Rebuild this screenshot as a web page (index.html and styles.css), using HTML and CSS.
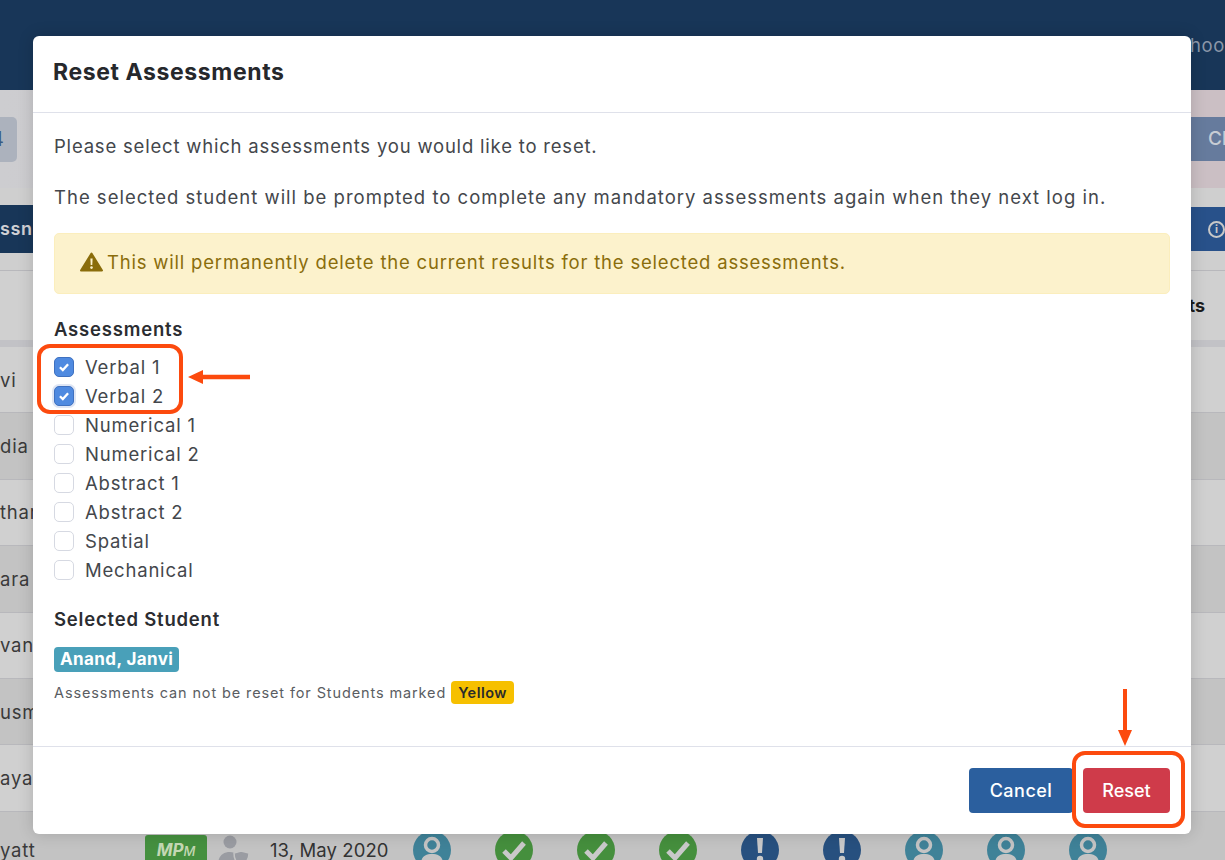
FILE: index.html
```html
<!DOCTYPE html>
<html lang="en">
<head>
  <meta charset="UTF-8" />
  <title>Reset Assessments</title>
  <link rel="stylesheet" href="styles.css">
</head>
<body>
  <div class="page">
    <header class="topbar"><span class="school">hoo</span></header>
    <div class="toolbar">
      <div class="count"><span>4</span></div>
      <div class="close-btn">Cl</div>
    </div>
    <div class="tabs">
      <div class="tab-left">ssn</div>
      <div class="tab-right"><span class="info">i</span></div>
    </div>
    <div class="thead"><span class="th-right">ts</span></div>
    <div class="rows">
      <div class="row"><span class="name">vi</span></div>
      <div class="row alt"><span class="name">dia</span></div>
      <div class="row"><span class="name">thar</span></div>
      <div class="row alt"><span class="name">ara</span></div>
      <div class="row"><span class="name">van</span></div>
      <div class="row alt"><span class="name">usm</span></div>
      <div class="row"><span class="name">aya</span></div>
      <div class="row alt last">
        <span class="name">yatt</span>
        <span class="mpm">MP<small>M</small></span>
        <svg class="guard" width="32" height="30" viewBox="0 0 32 30"><circle cx="12" cy="7" r="6.5" fill="#9a9ca2"/><path d="M0 30c0-9 5-13 12-13 3 0 5 1 7 2v11z" fill="#9a9ca2"/><path d="M23 16l8 2c0 6-2 10-8 12-5-2-7-6-7-12z" fill="#9a9ca2" stroke="#c4c4c4" stroke-width="1.5"/></svg>
        <span class="date">13, May 2020</span>
        <div class="dots">
          <span class="dot teal"><svg viewBox="0 0 38 38"><circle cx="19" cy="14" r="6.5" fill="none" stroke="#c4c4c4" stroke-width="3.5"/><path d="M8 33c0-7 4-10 11-10s11 3 11 10z" fill="#c4c4c4"/></svg></span>
          <span class="dot green"><svg viewBox="0 0 38 38"><path d="M9 20l7 7 13-15" fill="none" stroke="#c9c9c9" stroke-width="5"/></svg></span>
          <span class="dot green"><svg viewBox="0 0 38 38"><path d="M9 20l7 7 13-15" fill="none" stroke="#c9c9c9" stroke-width="5"/></svg></span>
          <span class="dot green"><svg viewBox="0 0 38 38"><path d="M9 20l7 7 13-15" fill="none" stroke="#c9c9c9" stroke-width="5"/></svg></span>
          <span class="dot navy"><svg viewBox="0 0 38 38"><path d="M16 7h6l-1 15h-4z" fill="#c9c9c9"/><circle cx="19" cy="28" r="3.2" fill="#c9c9c9"/></svg></span>
          <span class="dot navy"><svg viewBox="0 0 38 38"><path d="M16 7h6l-1 15h-4z" fill="#c9c9c9"/><circle cx="19" cy="28" r="3.2" fill="#c9c9c9"/></svg></span>
          <span class="dot teal"><svg viewBox="0 0 38 38"><circle cx="19" cy="14" r="6.5" fill="none" stroke="#c4c4c4" stroke-width="3.5"/><path d="M8 33c0-7 4-10 11-10s11 3 11 10z" fill="#c4c4c4"/></svg></span>
          <span class="dot teal"><svg viewBox="0 0 38 38"><circle cx="19" cy="14" r="6.5" fill="none" stroke="#c4c4c4" stroke-width="3.5"/><path d="M8 33c0-7 4-10 11-10s11 3 11 10z" fill="#c4c4c4"/></svg></span>
          <span class="dot teal"><svg viewBox="0 0 38 38"><circle cx="19" cy="14" r="6.5" fill="none" stroke="#c4c4c4" stroke-width="3.5"/><path d="M8 33c0-7 4-10 11-10s11 3 11 10z" fill="#c4c4c4"/></svg></span>
        </div>
      </div>
    </div>
  </div>

  <div class="modal">
    <div class="modal-header"><h2>Reset Assessments</h2></div>
    <div class="modal-body">
      <p>Please select which assessments you would like to reset.</p>
      <p class="long">The selected student will be prompted to complete any mandatory assessments again when they next log in.</p>
      <div class="alert">
        <svg class="warn" width="23" height="20" viewBox="0 0 23 20"><path d="M11.5 1.5L22 18.5H1z" fill="#8a6d0b" stroke="#8a6d0b" stroke-width="2" stroke-linejoin="round"/><path d="M10.4 6.5h2.2l-.3 6.5h-1.6z" fill="#fcf2cc"/><circle cx="11.5" cy="15.6" r="1.3" fill="#fcf2cc"/></svg>
        This will permanently delete the current results for the selected assessments.
      </div>
      <h3>Assessments</h3>
      <div class="checks">
        <label class="check"><span class="box on"><svg width="14" height="14" viewBox="0 0 12 12"><path d="M2.5 6.2l2.5 2.5 4.5-5" fill="none" stroke="#fff" stroke-width="2"/></svg></span>Verbal 1</label>
        <label class="check"><span class="box on focus"><svg width="14" height="14" viewBox="0 0 12 12"><path d="M2.5 6.2l2.5 2.5 4.5-5" fill="none" stroke="#fff" stroke-width="2"/></svg></span>Verbal 2</label>
        <label class="check"><span class="box"></span>Numerical 1</label>
        <label class="check"><span class="box"></span>Numerical 2</label>
        <label class="check"><span class="box"></span>Abstract 1</label>
        <label class="check"><span class="box"></span>Abstract 2</label>
        <label class="check"><span class="box"></span>Spatial</label>
        <label class="check"><span class="box"></span>Mechanical</label>
      </div>
      <h3 class="selected-title">Selected Student</h3>
      <span class="badge student">Anand, Janvi</span>
      <div class="note">Assessments can not be reset for Students marked <span class="badge yellow">Yellow</span></div>
    </div>
    <div class="modal-footer">
      <button class="btn cancel">Cancel</button>
      <button class="btn reset">Reset</button>
    </div>
  </div>

  <!-- annotations drawn over the screenshot -->
  <div class="mark mark-checks"></div>
  <div class="mark mark-reset"></div>
  <svg class="arrow arrow-left" width="62" height="16" viewBox="0 0 62 16"><path d="M62 8H12" stroke="#fc4a0e" stroke-width="4.5"/><path d="M0 8l15-7v14z" fill="#fc4a0e"/></svg>
  <svg class="arrow arrow-down" width="14" height="58" viewBox="0 0 14 58"><path d="M7 0v44" stroke="#fc4a0e" stroke-width="4"/><path d="M7 57L0 41h14z" fill="#fc4a0e"/></svg>
</body>
</html>
```

FILE: styles.css
```css
body {
  margin: 0;
  height: 860px;
  overflow: hidden;
  position: relative;
  font-family: "Inter", "Noto Sans", sans-serif;
  color: #212529;
  background: #cfcfcf;
}
.page {
  height: 860px;
  overflow: hidden;
}
.topbar {
  height: 90px;
  background: #183658;
  display: flex;
  justify-content: flex-end;
  align-items: flex-start;
  box-sizing: border-box;
  padding-top: 34px;
}
.school {
  color: #8b97a8;
  font-size: 18.5px;
  letter-spacing: 0.6px;
}
.toolbar {
  height: 98px;
  background: linear-gradient(to right, #cdcdd0 0%, #cbbfc4 90%);
  display: flex;
  align-items: center;
  justify-content: space-between;
}
.count {
  width: 17px;
  height: 45px;
  background: #acb2bd;
  border-radius: 0 5px 5px 0;
  color: #3b5a80;
  font-size: 20px;
  line-height: 45px;
  overflow: hidden;
}
.count span {
  margin-left: -9px;
}
.close-btn {
  width: 34px;
  height: 44px;
  box-sizing: border-box;
  background: #667b9d;
  color: #c7ccd4;
  font-size: 19px;
  font-weight: 500;
  line-height: 44px;
  padding-left: 17px;
  white-space: nowrap;
}
.tabs {
  display: flex;
  justify-content: space-between;
  height: 48px;
  margin-top: 17px;
}
.tab-left {
  width: 33px;
  background: #183658;
  color: #d0d0d4;
  font-size: 18px;
  font-weight: 600;
  line-height: 48px;
  letter-spacing: 0.6px;
}
.tab-right {
  width: 34px;
  margin: 2px 0;
  background: #28518a;
  padding-left: 17px;
  display: flex;
  align-items: center;
  box-sizing: border-box;
}
.info {
  width: 13px;
  height: 13px;
  border: 2px solid #c8c8c8;
  border-radius: 50%;
  color: #c8c8c8;
  font-size: 11px;
  font-weight: 700;
  text-align: center;
  line-height: 13px;
  flex-shrink: 0;
}
.thead {
  height: 77px;
  margin-top: 17px;
  background: #d0d0d0;
  border-top: 1px solid #b8b8bc;
  border-bottom: 7px solid #c2c2c6;
  box-sizing: border-box;
  display: flex;
  justify-content: flex-end;
  align-items: center;
  padding-right: 20px;
}
.th-right {
  font-size: 18px;
  font-weight: 700;
  color: #1c1c1c;
}
.row {
  height: 66.4px;
  display: flex;
  align-items: center;
  background: #d0d0d0;
  border-bottom: 1px solid #b8b8bc;
  box-sizing: border-box;
  font-size: 18.5px;
  letter-spacing: 0.8px;
  color: #3a3a3a;
}
.row.alt {
  background: #c3c3c3;
}
.name {
  width: 145px;
  flex-shrink: 0;
  white-space: nowrap;
}
.row.last {
  height: 78px;
  flex-shrink: 0;
}
.mpm {
  width: 62px;
  height: 30px;
  flex-shrink: 0;
  background: #45903f;
  border-radius: 3px;
  color: #c4d8b4;
  font-size: 17px;
  font-weight: 700;
  font-style: italic;
  letter-spacing: 0;
  text-align: center;
  line-height: 30px;
}
.mpm small {
  font-size: 13px;
  font-weight: 500;
}
.guard {
  margin-left: 11px;
  flex-shrink: 0;
}
.date {
  width: 143px;
  margin-left: 20px;
  flex-shrink: 0;
  letter-spacing: 0.1px;
  white-space: nowrap;
  color: #333;
}
.dots {
  display: flex;
  gap: 44px;
}
.dot {
  width: 38px;
  height: 38px;
  border-radius: 50%;
  overflow: hidden;
  flex-shrink: 0;
}
.dot svg {
  display: block;
  width: 38px;
  height: 38px;
}
.dot.teal {
  background: #3f8298;
}
.dot.green {
  background: #458f3d;
}
.dot.navy {
  background: #27507f;
}

.modal {
  position: absolute;
  left: 33px;
  top: 36px;
  width: 1158px;
  height: 798px;
  background: #fff;
  border-radius: 6px;
  display: flex;
  flex-direction: column;
  box-shadow: 0 0 16px rgba(0, 0, 0, 0.16);
}
.modal-header {
  height: 77px;
  box-sizing: border-box;
  border-bottom: 1px solid #dfe1ea;
  padding: 0 20px 4px;
  display: flex;
  align-items: center;
}
h2 {
  margin: 0;
  font-size: 23px;
  font-weight: 700;
  letter-spacing: 0.6px;
  color: #26282c;
}
.modal-body {
  flex: 1;
  padding: 20px 21px 0;
  font-size: 18.5px;
  letter-spacing: 0.8px;
  color: #44474c;
}
p {
  margin: 0 0 24px;
  line-height: 27px;
}
p.long {
  letter-spacing: 1px;
  margin-bottom: 22px;
}
.alert {
  height: 61px;
  box-sizing: border-box;
  background: #fcf2cc;
  border: 1px solid #fbeebd;
  border-radius: 5px;
  color: #8a6d0b;
  padding: 0 0 3px 25px;
  display: flex;
  align-items: center;
  gap: 4px;
  margin-bottom: 22px;
}
h3 {
  margin: 0;
  font-size: 18.5px;
  font-weight: 600;
  color: #2b2d31;
  line-height: 26px;
}
.checks {
  margin-top: 10px;
}
.check {
  display: flex;
  align-items: center;
  gap: 11px;
  height: 29px;
}
.box {
  width: 18px;
  height: 18px;
  border: 1px solid #d6d9e2;
  border-radius: 5px;
  display: flex;
  align-items: center;
  justify-content: center;
  background: #fff;
}
.box.on {
  background: #4f8ae0;
  border-color: #3f71c0;
}
.box.focus {
  box-shadow: 0 0 0 2px #dfe6f4;
}
.selected-title {
  margin-top: 22px;
}
.badge {
  display: inline-block;
  border-radius: 4px;
  font-weight: 700;
}
.student {
  margin-top: 15px;
  background: #49a0b9;
  color: #fff;
  font-size: 17px;
  letter-spacing: 0.4px;
  line-height: 25px;
  padding: 0 6px;
}
.note {
  margin-top: 9px;
  font-size: 14.5px;
  letter-spacing: 0.88px;
  color: #5a5d62;
}
.yellow {
  background: #f6c000;
  color: #2b2b2b;
  font-weight: 600;
  letter-spacing: 0.5px;
  line-height: 23px;
  padding: 0 7px;
}
.modal-footer {
  height: 88px;
  box-sizing: border-box;
  border-top: 1px solid #dfe1ea;
  padding: 21px 21px 0 0;
  display: flex;
  justify-content: flex-end;
  gap: 10px;
}
.btn {
  height: 45px;
  border: none;
  border-radius: 4px;
  color: #fff;
  font-family: inherit;
  font-size: 18px;
  font-weight: 500;
}
.cancel {
  width: 104px;
  background: #2b5f9e;
  letter-spacing: 0.5px;
}
.reset {
  width: 87px;
  background: #cf3b4a;
}

.mark {
  position: absolute;
  border: 4px solid #fc4a0e;
  border-radius: 13px;
  box-sizing: border-box;
}
.mark-checks {
  left: 37px;
  top: 344px;
  width: 146px;
  height: 70px;
}
.mark-reset {
  left: 1072px;
  top: 751px;
  width: 113px;
  height: 77px;
}
.arrow {
  position: absolute;
}
.arrow-left {
  left: 188px;
  top: 369px;
}
.arrow-down {
  left: 1118px;
  top: 689px;
}
```
